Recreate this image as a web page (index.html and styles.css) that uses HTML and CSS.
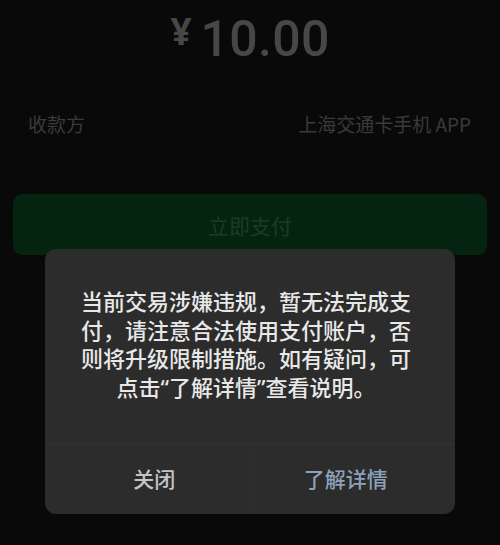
FILE: index.html
```html
<!DOCTYPE html>
<html lang="zh-CN">
<head>
<meta charset="utf-8">
<link rel="stylesheet" href="styles.css">
</head>
<body>
<div class="page">
  <div class="amount"><span class="yen">¥</span><span class="num">10.00</span></div>
  <div class="row">
    <span class="label">收款方</span>
    <span class="value">上海交通卡手机 APP</span>
  </div>
  <div class="paybtn">立即支付</div>

  <div class="dialog">
    <div class="msg">当前交易涉嫌违规，暂无法完成支付，请注意合法使用支付账户，否则将升级限制措施。如有疑问，可点击“了解详情”查看说明。</div>
    <div class="actions">
      <div class="act close">关闭</div>
      <div class="act more">了解详情</div>
    </div>
  </div>
</div>
</body>
</html>
```
FILE: styles.css
```css
html, body {
  margin: 0;
  padding: 0;
  background: #090909;
}
body {
  font-family: "Noto Sans CJK SC", "Noto Sans", sans-serif;
}
.page {
  position: relative;
  width: 500px;
  height: 545px;
  overflow: hidden;
  background: #090909;
}
.amount {
  display: flex;
  justify-content: center;
  align-items: flex-start;
  padding-top: 8px;
  color: #474747;
  height: 60px;
}
.yen {
  font-family: "Noto Sans", sans-serif;
  font-size: 37px;
  line-height: 46px;
  margin-right: 9px;
  font-weight: 700;
}
.num {
  font-family: Roboto, "Noto Sans", sans-serif;
  font-size: 50px;
  line-height: 62px;
  font-weight: 500;
  letter-spacing: 0.3px;
}
.row {
  display: flex;
  justify-content: space-between;
  align-items: center;
  margin-top: 43px;
  padding: 0 29px 0 28px;
  font-size: 19px;
  color: #3a3a3a;
  height: 24px;
}
.paybtn {
  margin: 59px 13px 0 13px;
  height: 61px;
  border-radius: 9px;
  background: #05240f;
  color: #1e3a25;
  font-size: 21px;
  display: flex;
  align-items: center;
  justify-content: center;
}
.dialog {
  position: absolute;
  left: 45px;
  top: 249px;
  width: 410px;
  height: 265px;
  border-radius: 11px;
  background: #2c2c2c;
  display: flex;
  flex-direction: column;
}
.msg {
  padding: 38px 41px 0 33px;
  height: 156px;
  font-family: "Noto Sans", "Noto Sans CJK SC", sans-serif;
  font-size: 22px;
  line-height: 28.5px;
  font-weight: 500;
  color: #e8e8e8;
  text-align: center;
}
.actions {
  flex: 1;
  display: flex;
  border-top: 1px solid #323232;
}
.act {
  flex: 1;
  display: flex;
  align-items: center;
  justify-content: center;
  font-size: 21px;
  font-weight: 500;
  padding-bottom: 3px;
}
.close {
  color: #c4c4c4;
  padding-left: 14px;
  border-right: 1px solid #2f2f2f;
}
.more {
  color: #8ea0bb;
  padding-right: 14px;
}
```
